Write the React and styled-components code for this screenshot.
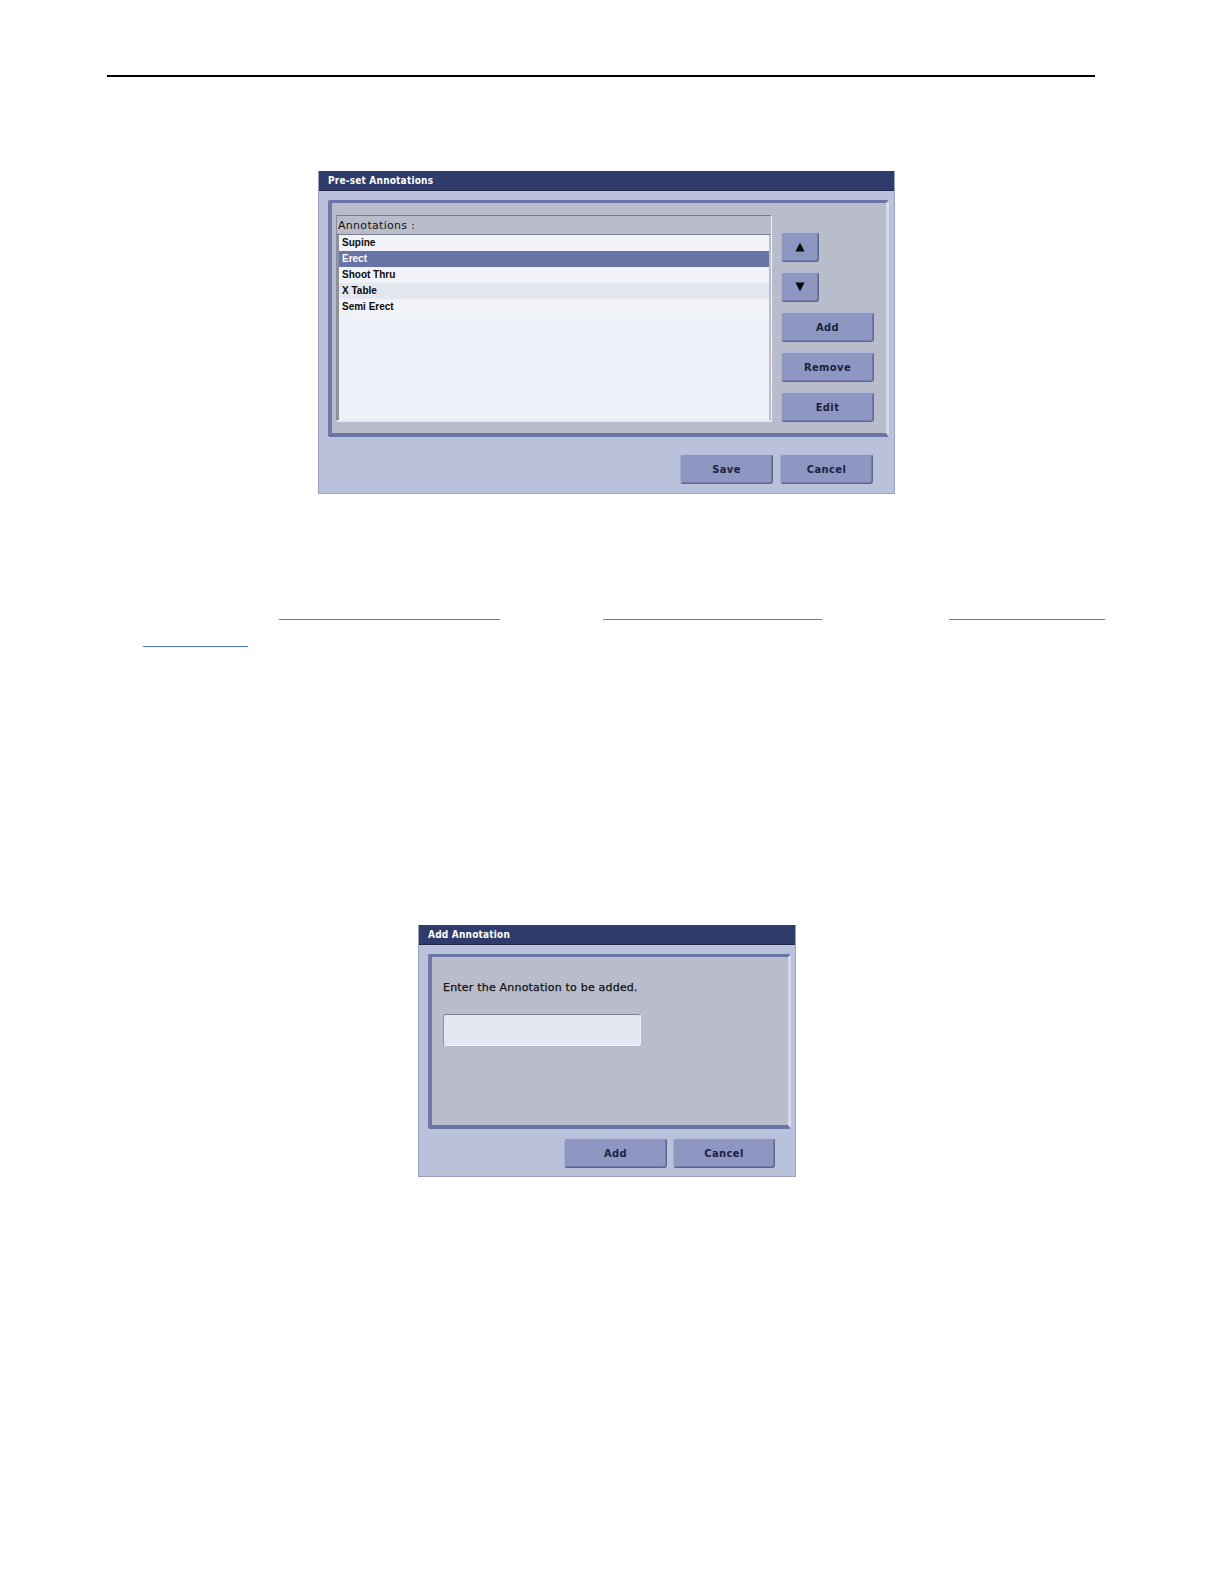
import React from 'react';
import styled, { createGlobalStyle } from 'styled-components';

const Global = createGlobalStyle`
  html, body {
    margin: 0;
    background: #ffffff;
    font-family: "DejaVu Sans", Verdana, sans-serif;
  }
`;

const Page = styled.div`
  width: 100%;
  padding-top: 75px;
  padding-bottom: 20px;
  box-sizing: border-box;
`;

const Rule = styled.div`
  margin-left: 107px;
  width: 988px;
  height: 2px;
  background: #000;
`;

const Dialog = styled.div`
  margin-top: ${({ top }) => top}px;
  margin-left: ${({ left }) => left}px;
  width: ${({ w }) => w}px;
  height: ${({ h }) => h}px;
  background: #bac1db;
  border: 1px solid #9aa2bf;
  border-top: none;
  box-sizing: border-box;
  display: flex;
  flex-direction: column;
`;

const TitleBar = styled.div`
  height: 20px;
  background: #2f3b6b;
  border-bottom: 1px solid #1e2548;
  box-sizing: border-box;
  color: #ffffff;
  font-family: "DejaVu Sans Condensed", "DejaVu Sans", sans-serif;
  font-weight: bold;
  font-size: 10px;
  letter-spacing: 0.2px;
  line-height: 20px;
  padding-left: 9px;
`;

const Body = styled.div`
  flex: 1;
  display: flex;
  flex-direction: column;
  padding: 9px ${({ pr }) => pr}px 0 9px;
`;

const Group = styled.div`
  height: ${({ h }) => h}px;
  box-sizing: border-box;
  background: #b9bdcb;
  border-top: 3px solid #6b74a6;
  border-left: 4px solid #6f78a8;
  border-bottom: 4px solid #6b74a6;
  border-right: 3px solid #d6dae8;
  border-radius: 2px;
  display: flex;
  padding: ${({ pad }) => pad};
`;

const ListBox = styled.div`
  width: 436px;
  height: 207px;
  box-sizing: border-box;
  border-top: 1px solid #7a7e8c;
  border-left: 1px solid #8b8f9c;
  border-right: 1px solid #f4f5fa;
  border-bottom: 2px solid #e6e8f0;
  display: flex;
  flex-direction: column;
`;

const ListHeader = styled.div`
  height: 18px;
  line-height: 20px;
  font-size: 11px;
  color: #111;
  padding-left: 1px;
  letter-spacing: 0.3px;
  border-bottom: 1px solid #787c8a;
`;

const ListArea = styled.div`
  flex: 1;
  background: #eff1f8;
  border-left: 2px solid #8e919c;
  border-right: 2px solid #b9bdcb;
`;

const Row = styled.div`
  height: 16px;
  line-height: 16px;
  padding-left: 3px;
  font-family: "Liberation Sans", Arial, sans-serif;
  font-weight: bold;
  font-size: 10px;
  color: ${({ selected }) => (selected ? '#ffffff' : '#0a0a0a')};
  background: ${({ selected, alt }) => (selected ? '#6874a6' : alt ? '#e4e7f0' : '#f2f3f9')};
`;

const SideColumn = styled.div`
  margin-left: 9px;
  padding-top: 17px;
  display: flex;
  flex-direction: column;
  gap: 10px;
`;

const Button = styled.button`
  width: ${({ w }) => w}px;
  height: 30px;
  padding: 0;
  margin: 0;
  background: #8d97c2;
  border: 1px solid #5d668f;
  border-top-color: #b3badb;
  border-left-color: #a7aed2;
  border-radius: 3px;
  box-shadow: inset -1px -1px 0 #727ca8;
  font-family: "DejaVu Sans Condensed", "DejaVu Sans", sans-serif;
  font-size: 11px;
  font-weight: bold;
  letter-spacing: 0.4px;
  color: #1b2140;
  display: flex;
  align-items: center;
  justify-content: center;
`;

const Footer = styled.div`
  display: flex;
  justify-content: flex-end;
  gap: ${({ gap }) => gap}px;
  margin-top: ${({ mt }) => mt}px;
  padding-right: ${({ pr }) => pr}px;
`;

const Prompt = styled.div`
  font-family: "DejaVu Sans", sans-serif;
  font-size: 11px;
  letter-spacing: 0.2px;
  color: #111;
  -webkit-text-stroke: 0.25px #111;
  margin-top: 24px;
`;

const TextField = styled.div`
  margin-top: 20px;
  width: 198px;
  height: 32px;
  box-sizing: border-box;
  background: #e4e6f2;
  border-top: 1px solid #7d8190;
  border-left: 1px solid #8d909d;
  border-right: 1px solid #f0f1f8;
  border-bottom: 1px solid #f0f1f8;
  border-radius: 3px;
`;

const GroupColumn = styled.div`
  display: flex;
  flex-direction: column;
`;

const Links = styled.div`
  margin-top: 125px;
  display: flex;
  flex-direction: column;
  gap: 25px;
`;

const LinkLine = styled.div`
  display: flex;
  height: 2px;
`;

const Link = styled.a`
  display: block;
  height: 0;
  margin-left: ${({ ml }) => ml}px;
  width: ${({ w }) => w}px;
  border-bottom: 1.5px solid #4a7fd2;
  color: #4a7fd2;
`;

const annotations = ['Supine', 'Erect', 'Shoot Thru', 'X Table', 'Semi Erect'];

function Triangle({ up }) {
  return (
    <svg width="10" height="10" viewBox="0 0 10 10">
      <path d={up ? 'M5 0.5 L9.5 9.5 L0.5 9.5 Z' : 'M0.5 0.5 L9.5 0.5 L5 9.5 Z'} fill="#0a0a0a" />
    </svg>
  );
}

function PresetDialog() {
  return (
    <Dialog top={94} left={318} w={577} h={323}>
      <TitleBar>Pre-set Annotations</TitleBar>
      <Body pr={5}>
        <Group h={237} pad="12px 0 0 4px">
          <ListBox>
            <ListHeader>Annotations :</ListHeader>
            <ListArea>
              {annotations.map((a, i) => (
                <Row key={a} selected={i === 1} alt={i === 3}>
                  {a}
                </Row>
              ))}
            </ListArea>
          </ListBox>
          <SideColumn>
            <Button w={38} aria-label="Move up"><Triangle up /></Button>
            <Button w={38} aria-label="Move down"><Triangle /></Button>
            <Button w={93}>Add</Button>
            <Button w={93}>Remove</Button>
            <Button w={93}>Edit</Button>
          </SideColumn>
        </Group>
        <Footer gap={7} mt={17} pr={16}>
          <Button w={93}>Save</Button>
          <Button w={93}>Cancel</Button>
        </Footer>
      </Body>
    </Dialog>
  );
}

function AddDialog() {
  return (
    <Dialog top={277} left={418} w={378} h={252}>
      <TitleBar>Add Annotation</TitleBar>
      <Body pr={4}>
        <Group h={175} pad="0 0 0 11px">
          <GroupColumn>
            <Prompt>Enter the Annotation to be added.</Prompt>
            <TextField />
          </GroupColumn>
        </Group>
        <Footer gap={6} mt={9} pr={16}>
          <Button w={103}>Add</Button>
          <Button w={102}>Cancel</Button>
        </Footer>
      </Body>
    </Dialog>
  );
}

export default function App() {
  return (
    <>
      <Global />
      <Page>
        <Rule />
        <PresetDialog />
        <Links>
          <LinkLine>
            <Link ml={279} w={221} />
            <Link ml={103} w={219} />
            <Link ml={127} w={156} />
          </LinkLine>
          <LinkLine>
            <Link ml={143} w={105} />
          </LinkLine>
        </Links>
        <AddDialog />
      </Page>
    </>
  );
}
